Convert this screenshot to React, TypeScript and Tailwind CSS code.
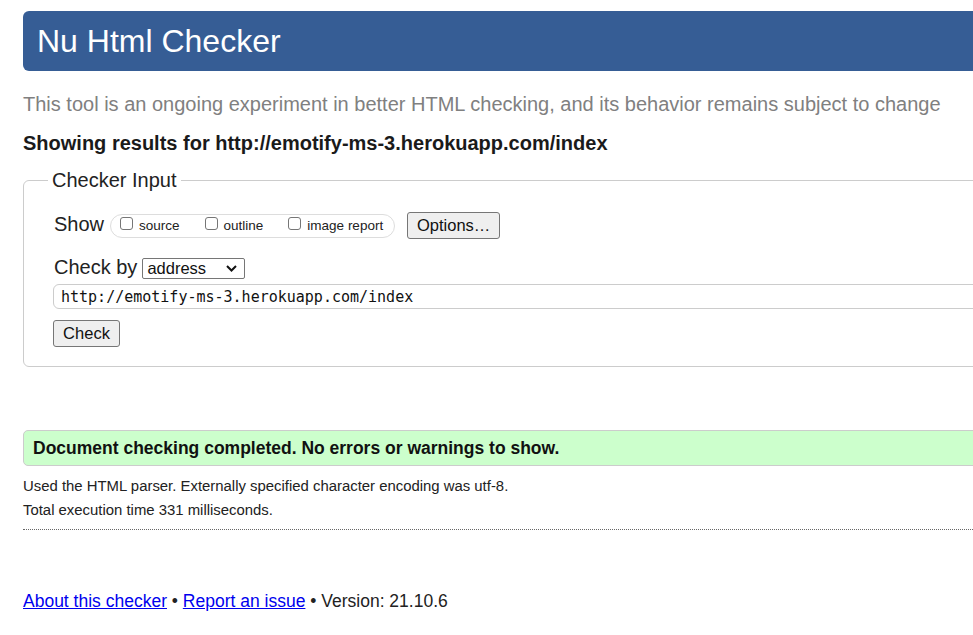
import React from 'react';

const Box = ({ label }: { label: string }) => (
    <span className="flex items-center">
        <span className="mb-[5px] block h-[13px] w-[13px] rounded-[3px] border border-[#767676] bg-white" />
        <span className="ml-[6px] text-[13.5px] leading-[24px] text-[#222]">{label}</span>
    </span>
);

export default function App() {
    return (
        <div className="h-[635px] w-[973px] overflow-hidden bg-white font-['Liberation_Sans',Arial,sans-serif] text-[#222]">
            <div className="ml-[23px] w-[1000px] pt-[11px]">
                <div className="h-[60px] rounded-l-[6px] bg-[#365d95] pl-[14px] text-[32px] leading-[60px] text-white">
                    Nu Html Checker
                </div>

                <p className="mt-[21px] text-[20px] leading-[24px] text-[#808080]">
                    This tool is an ongoing experiment in better HTML checking, and its behavior remains subject to change
                </p>
                <p className="mt-[15px] text-[20px] font-bold leading-[24px] text-[#1a1a1a]">
                    Showing results for http://emotify-ms-3.herokuapp.com/index
                </p>

                <fieldset className="mt-[13px] rounded-[6px] border border-[#cccccc] pb-[19px]">
                    <legend className="ml-[24px] px-[4px] text-[20px] leading-[24px]">Checker Input</legend>

                    <div className="pl-[29px]">
                        <div className="mt-[20px] flex h-[27px] items-center">
                            <span className="mb-[3px] ml-px text-[20px]">Show</span>
                            <div className="ml-[6px] flex h-[24px] items-center gap-[25px] rounded-[12px] border border-[#dddddd] pl-[9px] pr-[11px]">
                                <Box label="source" />
                                <Box label="outline" />
                                <Box label="image report" />
                            </div>
                            <button className="ml-[12px] h-[27px] w-[93px] rounded-[3px] border border-[#767676] bg-[#efefef] text-[16.5px] text-[#111]">
                                Options…
                            </button>
                        </div>

                        <div className="mt-[19px] flex h-[21px] items-center">
                            <span className="mb-[3px] ml-px text-[20px]">Check by</span>
                            <div className="ml-[5px] flex h-[21px] w-[103px] items-center justify-between rounded-[2px] border border-[#767676] pl-[4px] pr-[7px]">
                                <span className="text-[16.5px] leading-[19px] text-[#111]">address</span>
                                <svg width="11" height="7" viewBox="0 0 11 7" fill="none">
                                    <path d="M1 1l4.5 4.5L10 1" stroke="#111" strokeWidth="2" />
                                </svg>
                            </div>
                        </div>

                        <div className="mt-[5px] h-[25px] w-[960px] rounded-[6px] border border-[#cccccc] pl-[7px] font-['DejaVu_Sans_Mono',monospace] text-[15px] leading-[25px] text-[#111]">
                            http://emotify-ms-3.herokuapp.com/index
                        </div>

                        <button className="mt-[11px] block h-[27px] w-[67px] rounded-[3px] border border-[#767676] bg-[#efefef] text-[16.5px] text-[#111]">
                            Check
                        </button>
                    </div>
                </fieldset>

                <div className="mt-[63px] h-[36px] rounded-l-[5px] border border-[#cccccc] bg-[#ccffcc] pl-[9px] text-[17.5px] font-bold leading-[34px] text-[#111]">
                    Document checking completed. No errors or warnings to show.
                </div>

                <p className="mt-[8px] text-[14.9px] leading-[24px]">
                    Used the HTML parser. Externally specified character encoding was utf-8.
                </p>
                <p className="text-[14.9px] leading-[24px]">Total execution time 331 milliseconds.</p>
                <div className="mt-[7px] border-t border-dotted border-[#666666]" />

                <p className="mt-[59px] text-[17.5px] leading-[24px]">
                    <a href="#" className="text-[#0000ee] underline">About this checker</a>
                    {' • '}
                    <a href="#" className="text-[#0000ee] underline">Report an issue</a>
                    {' • Version: 21.10.6'}
                </p>
            </div>
        </div>
    );
}
